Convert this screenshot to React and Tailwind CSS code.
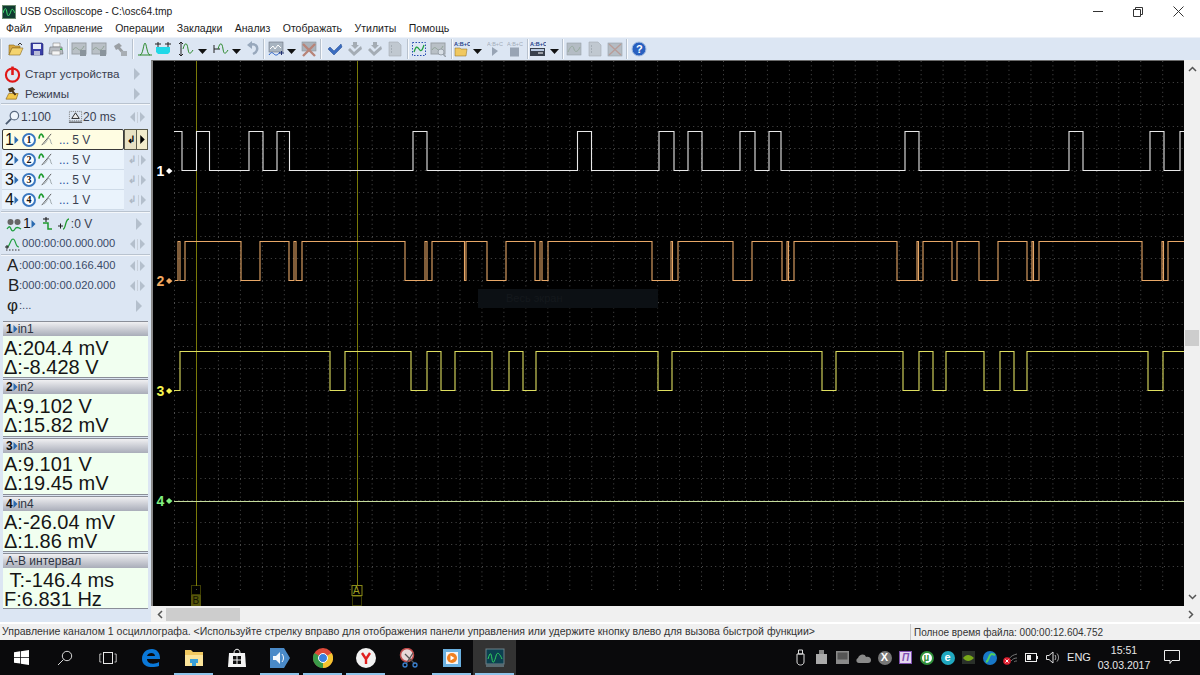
import React from 'react';

const SANS = 'font-["Liberation_Sans",Arial,sans-serif]';

// ---------- scope traces, x of every edge in page pixels ----------
const traces = [
  {
    color: '#e8e8e8', hi: 131.5, lo: 170.5, startHigh: true, from: 174, to: 1184,
    edges: [182, 196.5, 209.5, 249, 263, 277, 289.5, 413, 427, 577.5, 591.5, 659, 674, 688, 702, 740, 755, 769, 781, 905, 919, 1069, 1083, 1150, 1164, 1180],
  },
  {
    color: '#e8a868', hi: 241.5, lo: 280.5, startHigh: false, from: 175, to: 1184,
    edges: [178, 180, 185, 241, 260, 289, 294, 296, 302, 405, 425, 427, 432, 464.5, 466, 487, 506, 535, 540, 542, 548, 652, 671, 672.5, 678, 733, 752, 782, 787, 788.5, 794, 897, 917, 918.5, 923, 952, 957, 979, 998, 1027, 1032, 1033.5, 1039, 1142, 1162, 1163.5, 1168],
  },
  {
    color: '#dede60', hi: 351.5, lo: 390.5, startHigh: false, from: 174, to: 1184,
    edges: [180, 330, 345, 411, 427, 441, 455, 492, 509, 523, 536, 658, 672, 822, 836, 903, 919, 933, 946, 984, 1000, 1014, 1027, 1148, 1163],
  },
];

function wavePath({ hi, lo, startHigh, from, to, edges }) {
  let high = startHigh;
  let d = `M${from} ${high ? hi : lo}`;
  edges.forEach((x) => {
    d += `H${x}`;
    high = !high;
    d += `V${high ? hi : lo}`;
  });
  return d + `H${to}`;
}

const gridCols = Array.from({ length: 46 }, (_, i) => 174.5 + i * 21.96);
const gridRows = Array.from({ length: 24 }, (_, i) => 60.5 + i * 22);

function Scope() {
  return (
    <div className="relative flex-1 bg-black border-t border-l-2 border-t-[#6a6a6a] border-l-[#8a8a8a] overflow-hidden">
      <svg className="block w-full h-full" viewBox="153 61 1031 545">
        {gridRows.map((y) => (
          <line key={y} x1="174" x2="1184" y1={y} y2={y} stroke="#4c4c4c" strokeDasharray="1 3.4" />
        ))}
        {gridCols.map((x) => (
          <line key={x} x1={x} x2={x} y1="61" y2="590" stroke="#4c4c4c" strokeDasharray="1 3.4" />
        ))}
        <line x1="196.5" x2="196.5" y1="61" y2="586" stroke="#7a7a08" />
        <line x1="357.5" x2="357.5" y1="61" y2="586" stroke="#7a7a08" />
        {traces.map((t) => (
          <path key={t.color} d={wavePath(t)} fill="none" stroke={t.color} strokeWidth="1.100" />
        ))}
        <line x1="174" x2="1184" y1="501.5" y2="501.5" stroke="#c6dc9c" />
        {[
          ['1', 176, '#ffffff'],
          ['2', 286, '#f0a860'],
          ['3', 396, '#f4f450'],
          ['4', 506, '#80f080'],
        ].map(([n, y, c]) => (
          <g key={n} fill={c}>
            <text x="156.500" y={y} fontSize="14" fontWeight="700" fontFamily="Liberation Sans">{n}</text>
            <path d={`M166 ${y - 5}l3-3 3.500 3-3.500 3z`} />
          </g>
        ))}
        {/* cursor flags */}
        <rect x="191.500" y="585.500" width="9" height="9" fill="none" stroke="#7a7a08" strokeDasharray="1 1" />
        <rect x="191" y="595" width="10" height="11" fill="#55550a" />
        <text x="192.500" y="604" fontSize="10" fill="#121200" fontFamily="Liberation Sans">B</text>
        <rect x="352" y="585.500" width="10" height="10" fill="none" stroke="#8a8a18" />
        <text x="353" y="594" fontSize="10" fill="#a0a020" fontFamily="Liberation Sans">A</text>
        <rect x="352.500" y="596.500" width="9" height="9" fill="none" stroke="#7a7a08" strokeDasharray="1 1" />
      </svg>
      <div className="absolute left-[325px] top-[228px] w-[180px] h-[19px] bg-[#0c1014] pl-[28px] text-[11px] leading-[19px] text-[#14181c]">
        Весь экран
      </div>
    </div>
  );
}

// ---------- small drawn icons ----------
function Svg({ s = 16, className = '', children }) {
  return (
    <svg width={s} height={s} viewBox="0 0 16 16" className={`shrink-0 ${className}`}>
      {children}
    </svg>
  );
}

const DisabledScreen = () => (
  <>
    <rect x="1" y="2" width="14" height="11" fill="#b9c0c6" stroke="#99a0a6" />
    <path d="M2 9c2-3 3-3 5-1s4 1 6-3" fill="none" stroke="#8fa396" />
  </>
);

const tbIcons = {
  folder: (
    <Svg>
      <path d="M1 4h5l1 1h5v2H4L1 14z" fill="#d8a840" stroke="#8a6a20" strokeWidth=".6" />
      <path d="M4 7h11l-3 7H1z" fill="#f4d470" stroke="#8a6a20" strokeWidth=".6" />
      <path d="M10 4l2-2 2 2" fill="none" stroke="#333" />
    </Svg>
  ),
  save: (
    <Svg>
      <path d="M2 2h11l1 1v11H2z" fill="#3a3fa8" stroke="#20246a" strokeWidth=".6" />
      <rect x="4" y="3" width="8" height="5" fill="#e8ecf8" />
      <rect x="5" y="10" width="6" height="4" fill="#b8bcd8" />
    </Svg>
  ),
  print: (
    <Svg>
      <path d="M5 2h7v4H5z" fill="#f4f4f4" stroke="#888" strokeWidth=".6" />
      <path d="M2 6h12l1 7H1z" fill="#b8bcc2" stroke="#6c7076" strokeWidth=".6" />
      <rect x="4" y="10" width="8" height="4" fill="#f4f4f4" stroke="#888" strokeWidth=".5" />
      <rect x="12" y="7.500" width="2" height="1.500" fill="#30b040" />
    </Svg>
  ),
  grayDisk: (
    <Svg>
      <DisabledScreen />
      <rect x="9" y="9" width="6" height="6" fill="#8a949c" />
    </Svg>
  ),
  hammer: (
    <Svg>
      <path d="M2 5l5-3 3 3-2 1 6 7-2 2-6-7-2 1z" fill="#9a9fa4" />
      <rect x="9" y="10" width="6" height="5" fill="#a8aeb4" />
    </Svg>
  ),
  peak: (
    <Svg>
      <path d="M1 14h14" stroke="#2d8a2d" fill="none" />
      <path d="M3 14c3 0 3.500-12 5-12s2 12 5 12" fill="none" stroke="#2d8a2d" />
    </Svg>
  ),
  cyan: (
    <Svg>
      <path d="M1 6h14v5l-2 2H3L1 11z" fill="#20d8e8" />
      <path d="M0 3h6M10 3h6M3 1v5M13 1v5" stroke="#222" />
    </Svg>
  ),
  arrowsA: (
    <Svg>
      <path d="M3 1v14M1 3l2-2 2 2M1 13l2 2 2-2" fill="none" stroke="#222" />
      <path d="M5 8c2-7 4-7 5 0s3 4 5 1" fill="none" stroke="#2d8a2d" />
    </Svg>
  ),
  arrowsB: (
    <Svg>
      <path d="M1 8h6M1 4v8" fill="none" stroke="#222" />
      <path d="M5 8c2-7 4-7 5 0s3 4 5 1" fill="none" stroke="#2d8a2d" />
    </Svg>
  ),
  undo: (
    <Svg>
      <path d="M5 4c5-2 8 1 7 5-.5 2-2 3-4 4" fill="none" stroke="#98a8bc" strokeWidth="2.500" />
      <path d="M7 0L2 4l5 4z" fill="#98a8bc" />
    </Svg>
  ),
  scopeAdd: (
    <Svg>
      <rect x="1" y="1" width="14" height="10" fill="#a8b4c0" stroke="#6c7480" strokeWidth=".6" />
      <path d="M2 8l3-3 2 3 3-4 3 3" fill="none" stroke="#fff" />
      <path d="M1 14c2-3 3-3 5-1s4 1 6-2" fill="none" stroke="#2860c8" />
      <path d="M11 12h5M13.500 10v4" stroke="#203070" />
    </Svg>
  ),
  scopeX: (
    <Svg>
      <rect x="1" y="1" width="14" height="9" fill="#aab2ba" stroke="#8c949c" strokeWidth=".6" />
      <path d="M2 15L14 3M2 3l12 12" stroke="#b88478" strokeWidth="2.400" />
    </Svg>
  ),
  check: (
    <Svg>
      <path d="M1 8l2-2 4 4 7-7 1 3-8 8z" fill="#3a6cc0" stroke="#204a90" strokeWidth=".5" />
    </Svg>
  ),
  checkGray: (
    <Svg>
      <path d="M1 9l2-2 4 4 7-6 1 3-8 7z" fill="#a4acb4" />
      <path d="M6 1h4v3h2L8 8 4 4h2z" fill="#a4acb4" />
    </Svg>
  ),
  page: (
    <Svg>
      <path d="M2 1h9l3 3v11H2z" fill="#c0c8d0" stroke="#a4acb4" strokeWidth=".6" />
      <path d="M4 5h1M4 8h1M4 11h1" stroke="#8a949c" />
    </Svg>
  ),
  dotsScope: (
    <Svg>
      <rect x="1.500" y="1.500" width="13" height="13" fill="none" stroke="#2a50b0" strokeDasharray="1.500 1.500" />
      <path d="M3 11c2-6 3-6 5-3s3 2 5-4" fill="none" stroke="#20a040" strokeWidth="1.300" />
    </Svg>
  ),
  lens: (
    <Svg>
      <DisabledScreen />
      <circle cx="11" cy="11" r="3" fill="#d8dfe6" stroke="#9aa2aa" />
      <path d="M13 13l3 3" stroke="#9aa2aa" strokeWidth="1.500" />
    </Svg>
  ),
  abcFolder: (
    <Svg>
      <text x="0" y="5" fontSize="5.500" fontWeight="700" fill="#22408a" fontFamily="Liberation Sans">A:B+C</text>
      <path d="M1 7h5l1 1h6l-1 7H1z" fill="#f0c860" stroke="#8a6a20" strokeWidth=".5" />
    </Svg>
  ),
  abcPlay: (
    <Svg>
      <text x="0" y="5" fontSize="5.500" fill="#a4acb8" fontFamily="Liberation Sans">A:B+C</text>
      <path d="M5 6l6 4-6 5z" fill="#98a4b4" />
    </Svg>
  ),
  abcStop: (
    <Svg>
      <text x="0" y="5" fontSize="5.500" fill="#a4acb8" fontFamily="Liberation Sans">A:B+C</text>
      <rect x="3" y="6.500" width="9" height="9" fill="#98a4b4" />
    </Svg>
  ),
  abcPanel: (
    <Svg>
      <text x="0" y="5" fontSize="5.500" fontWeight="700" fill="#22408a" fontFamily="Liberation Sans">A:B+C</text>
      <rect x="0" y="7" width="15" height="8" fill="#38404c" />
      <rect x="1" y="8" width="13" height="2" fill="#b8c8e0" />
      <path d="M8 12h5" stroke="#fff" />
    </Svg>
  ),
  grayWave: (
    <Svg>
      <rect x="1" y="2" width="14" height="12" fill="#b4bcc4" stroke="#98a0a8" strokeWidth=".6" />
      <path d="M2 11c3-7 5-7 6-3s4 3 6-2" fill="none" stroke="#98aca0" />
    </Svg>
  ),
  grayX: (
    <Svg>
      <rect x="1" y="2" width="14" height="13" fill="#b4bcc4" stroke="#98a0a8" strokeWidth=".6" />
      <path d="M2 3l12 11M14 3L2 14" stroke="#b89c98" strokeWidth="1.300" />
    </Svg>
  ),
  help: (
    <Svg>
      <circle cx="8" cy="8" r="7" fill="#2860c0" stroke="#a8c0e0" />
      <text x="5" y="12" fontSize="11" fontWeight="700" fill="#fff" fontFamily="Liberation Sans">?</text>
    </Svg>
  ),
};

// icon name (or sep / drop) and the width it takes in the bar
const toolbar = [
  ['sep', 8], ['folder', 21], ['save', 19], ['print', 19], ['sep', 4], ['grayDisk', 20], ['grayDisk', 21], ['hammer', 20],
  ['sep', 5], ['peak', 18], ['cyan', 23], ['arrowsA', 20], ['drop', 15], ['arrowsB', 19], ['drop', 13], ['undo', 18],
  ['sep', 5], ['scopeAdd', 19], ['drop', 14], ['scopeX', 19], ['sep', 7], ['check', 20], ['checkGray', 20], ['checkGray', 20], ['page', 20],
  ['sep', 4], ['dotsScope', 19], ['lens', 21], ['sep', 3], ['abcFolder', 19], ['drop', 14], ['abcPlay', 20], ['abcStop', 20],
  ['sep', 3], ['abcPanel', 20], ['drop', 12], ['sep', 4], ['grayWave', 21], ['page', 20], ['grayX', 19], ['sep', 5], ['help', 16],
];

function Toolbar() {
  return (
    <div className="flex items-center h-[23px] bg-[#dce6f3] border-t border-t-[#eef2f8]">
      {toolbar.map(([name, w], i) => (
        <div key={i} className="flex items-center h-full shrink-0" style={{ width: w }}>
          {name === 'sep' ? (
            <div className="w-[2px] h-[20px] bg-[#f8fafd] border-l border-l-[#b8c2ce]" />
          ) : name === 'drop' ? (
            <svg width="9" height="5" viewBox="0 0 9 5" className="mt-1"><path d="M0 0h9L4.500 5z" fill="#111" /></svg>
          ) : (
            tbIcons[name]
          )}
        </div>
      ))}
    </div>
  );
}

// ---------- left panel ----------
function Tri({ right = true, c = '#b4bfcc', w = 6, h = 12 }) {
  return (
    <svg width={w} height={h} viewBox="0 0 6 12" className="shrink-0">
      <path d={right ? 'M0 0l6 6-6 6z' : 'M6 0L0 6l6 6z'} fill={c} />
    </svg>
  );
}

function BothArrows() {
  return (
    <div className="flex items-center gap-[2px] ml-auto mr-[6px]">
      <Tri right={false} w={5} h={10} />
      <div className="w-px h-[11px] bg-[#c8d0da]" />
      <Tri w={5} h={10} />
    </div>
  );
}

function Row({ h, children, className = '' }) {
  return (
    <div className={`flex items-center shrink-0 ${className}`} style={{ height: h }}>
      {children}
    </div>
  );
}

const Sep = () => <div className="h-[2px] mx-[1px] shrink-0 bg-[#b9c3cf] border-b border-b-[#f4f7fb]" />;

const Probe = () => (
  <Svg s={15}>
    <path d="M1 7c1-6 3-6 5-1" fill="none" stroke="#1e9a2e" strokeWidth="1.800" />
    <path d="M4 14L14 2" stroke="#555" />
    <path d="M6 13c3-1 4-7 6-6s1 5 3 6" fill="none" stroke="#9aa4a8" />
  </Svg>
);

function ChannelRow({ n, volts, active }) {
  return (
    <div className={`flex shrink-0 pl-[2px] ${active ? 'h-[21px]' : 'h-[20px]'}`}>
      <div
        className={`flex items-center w-[122px] ${
          active
            ? 'bg-[#fffde2] border border-[#3a3a3a] rounded-[2px] pl-[2px]'
            : 'bg-[#eaf3fc] border-b border-b-[#cfdbe8] pl-[3px]'
        }`}
      >
        <span className="text-[16px] leading-none w-[9px] text-[#111]">{n}</span>
        <Tri c="#2a6ab0" w={5} h={8} />
        <div className="ml-[3px] flex items-center justify-center w-[14px] h-[14px] rounded-full border-2 border-[#3a78c0] bg-white text-[10px] leading-none font-['Liberation_Serif',serif] font-bold text-[#111]">
          {n}
        </div>
        <div className="ml-[2px]"><Probe /></div>
        <span className="ml-[6px] text-[12px] text-[#3a4050]"><span className="text-[#2a50a0]">...</span> {volts}</span>
      </div>
      {active ? (
        <div className="flex h-[21px] w-[24px]">
          <div className="w-[13px] bg-[#e8e2c4] border border-[#5a5a4a] flex items-center justify-center text-[10px] font-bold text-black">↲</div>
          <div className="w-[11px] bg-[#f2eccc] border-y border-r border-[#5a5a4a] flex items-center justify-center"><Tri c="#000" w={5} h={9} /></div>
        </div>
      ) : (
        <div className="flex items-center gap-[2px] w-[24px] pl-[4px]">
          <span className="text-[10px] font-bold leading-none text-[#aeb8c4]">↲</span>
          <div className="w-px h-[11px] bg-[#c8d0da]" />
          <Tri w={5} h={10} />
        </div>
      )}
    </div>
  );
}

const timeCls = 'text-[11.200px] leading-none text-[#3a4a68]';

function Measure({ head, lines, h, tight }) {
  return (
    <div className="mx-[3px] shrink-0 mb-[1px]">
      <div className="h-[15px] bg-linear-to-b from-[#f0f0f2] to-[#a9adb9] border-t border-t-[#8a8e98] text-[12px] leading-[14px] pl-[3px] text-[#2e3442] flex items-center">
        {head}
      </div>
      <div
        className={`bg-[#f1fff0] border-b border-b-[#8a8e98] text-[20px] leading-[19px] pl-[1px] text-[#151515] ${tight ? 'pt-[2px]' : 'pt-[3px]'}`}
        style={{ height: h }}
      >
        {lines.map((l) => (
          <div key={l}>{l}</div>
        ))}
      </div>
    </div>
  );
}

const ChHead = ({ n, name }) => (
  <>
    <b className="text-[#111]">{n}</b>
    <Tri c="#2a6ab0" w={5} h={8} />
    <span>{name}</span>
  </>
);

function LeftPanel() {
  return (
    <aside className="w-[151px] shrink-0 bg-[#dce6f3] flex flex-col text-[#3a4050]">
      <Row h={24} className="pl-[4px] pt-[4px]">
        <Svg s={17}>
          <circle cx="8" cy="8.500" r="6.200" fill="none" stroke="#e01818" strokeWidth="2" />
          <rect x="6.800" y="0.500" width="2.400" height="8" fill="#e01818" />
        </Svg>
        <span className="ml-[4px] text-[11.600px] w-[109px]">Старт устройства</span>
        <Tri />
      </Row>
      <Row h={19} className="pl-[5px]">
        <Svg s={15}>
          <path d="M1 14l3-6h10l-2 6z" fill="#f4c848" stroke="#8a6418" strokeWidth=".7" />
          <path d="M3 3l5-2 3 3-2 1 3 4-1.500 1L7 6 5 7z" fill="#4a3418" />
        </Svg>
        <span className="ml-[5px] text-[11.600px] w-[109px]">Режимы</span>
        <Tri />
      </Row>
      <Sep />
      <Row h={24} className="pl-[5px] text-[12px]">
        <Svg s={15}>
          <circle cx="10" cy="6" r="4.500" fill="#f0f6fc" stroke="#5a6a80" strokeWidth="1.300" />
          <path d="M6.500 9.500L1 15" stroke="#4a5a70" strokeWidth="2" />
        </Svg>
        <span className="ml-[1px] w-[47px]">1:100</span>
        <Svg s={15}>
          <rect x="1.500" y="1.500" width="13" height="10" fill="none" stroke="#777" strokeDasharray="1 1" />
          <path d="M8 3l4 6H4zM1 13h14" fill="#eee" stroke="#222" />
        </Svg>
        <span>20 ms</span>
        <BothArrows />
      </Row>
      <div className="flex flex-col">
        <ChannelRow n="1" volts="5 V" active />
        <ChannelRow n="2" volts="5 V" />
        <ChannelRow n="3" volts="5 V" />
        <ChannelRow n="4" volts="1 V" />
      </div>
      <div className="h-[1px]" />
      <Sep />
      <Row h={21} className="pl-[6px] text-[12px]">
        <Svg s={16}>
          <circle cx="4.500" cy="6" r="3" fill="#666" />
          <circle cx="11.500" cy="6" r="3" fill="#666" />
          <path d="M1 13c2-3 3-3 4 0s3 2 4 0 3-2 6 0" fill="none" stroke="#20a040" strokeWidth="1.300" />
        </Svg>
        <span className="ml-[1px] text-[14px] text-[#111]">1</span>
        <Tri c="#2a6ab0" w={5} h={8} />
        <svg width="10" height="13" viewBox="0 0 10 13" className="ml-[6px]">
          <path d="M1 2h6M4 0v5" stroke="#111" />
          <path d="M1 6h5v6h4" fill="none" stroke="#1e9a2e" strokeWidth="1.500" />
        </svg>
        <svg width="12" height="14" viewBox="0 0 12 14" className="ml-[6px]">
          <path d="M0 9h5M2.500 6.500v5" stroke="#222" />
          <path d="M5 12c3 0 2-10 6-10" fill="none" stroke="#1e9a2e" strokeWidth="1.300" />
        </svg>
        <span className="ml-[1px]">:0 V</span>
        <div className="ml-auto mr-[9px]"><Tri /></div>
      </Row>
      <Row h={20} className="pl-[5px]">
        <Svg s={16}>
          <path d="M2 11c3 0 3-8 6-8s2 8 6 8" fill="none" stroke="#20a040" strokeWidth="1.200" />
          <path d="M1 14h14" stroke="#333" strokeDasharray="1.500 1.500" />
          <path d="M0 11h4M2 9v4" stroke="#222" />
        </Svg>
        <span className={`ml-[1px] ${timeCls}`}>000:00:00.000.000</span>
        <BothArrows />
      </Row>
      <Sep />
      <Row h={19} className="pl-[7px]">
        <span className="text-[17px] w-[12px] text-[#222]">A</span>
        <span className={timeCls}>:000:00:00.166.400</span>
        <BothArrows />
      </Row>
      <Row h={21} className="pl-[8px]">
        <span className="text-[17px] w-[11px] text-[#222]">B</span>
        <span className={timeCls}>:000:00:00.020.000</span>
        <BothArrows />
      </Row>
      <Row h={19} className="pl-[7px]">
        <span className="text-[17px] w-[12px] text-[#222]">φ</span>
        <span className={timeCls}>:...</span>
        <div className="ml-auto mr-[9px]"><Tri /></div>
      </Row>
      <div className="h-[6px] shrink-0" />
      <Measure head={<ChHead n="1" name="in1" />} lines={['A:204.4 mV', 'Δ:-8.428 V']} h={42} />
      <Measure head={<ChHead n="2" name="in2" />} lines={['A:9.102 V', 'Δ:15.82 mV']} h={43} />
      <Measure head={<ChHead n="3" name="in3" />} lines={['A:9.101 V', 'Δ:19.45 mV']} h={42} tight />
      <Measure head={<ChHead n="4" name="in4" />} lines={['A:-26.04 mV', 'Δ:1.86 mV']} h={41} tight />
      <Measure head="A-B интервал" lines={['\u00a0T:-146.4 ms', 'F:6.831 Hz']} h={41} />
    </aside>
  );
}

// ---------- taskbar ----------
const taskIcons = [
  { active: false, el: (
    <svg width="15" height="15" viewBox="0 0 16 16"><path d="M0 2.300L6.500 1.400V7.500H0zM7.300 1.300L16 0V7.500H7.300zM0 8.300H6.500V14.500L0 13.600zM7.300 8.300H16V16L7.300 14.700z" fill="#fff" /></svg>
  ) },
  { active: false, el: (
    <svg width="16" height="16" viewBox="0 0 16 16"><circle cx="10" cy="6" r="4.700" fill="none" stroke="#d8d8d8" /><path d="M6.500 9.500L1 15" stroke="#d8d8d8" /></svg>
  ) },
  { active: false, el: (
    <svg width="18" height="14" viewBox="0 0 18 14"><rect x="4.500" y="1.500" width="9" height="11" fill="none" stroke="#e8e8e8" /><path d="M2.500 3H.8v8h1.700M15.500 3h1.700v8h-1.700" fill="none" stroke="#bbb" /></svg>
  ) },
  { active: false, el: (
    <svg width="20" height="20" viewBox="0 0 20 20"><path d="M1 11C1 5 5 1 11 1c5 0 8 4 8 9v1H6c0 5 7 6 12 3v4c-6 2-17 2-17-7zM6 8h8c0-4-7-4-8 0z" fill="#0a78d8" /></svg>
  ) },
  { active: true, el: (
    <svg width="20" height="18" viewBox="0 0 20 18"><path d="M1 1h6l2 2h10v14H1z" fill="#f0c860" /><rect x="1" y="6" width="18" height="11" fill="#fbe49a" /><rect x="6" y="10" width="8" height="4" fill="#3aa0d8" /><rect x="8" y="14" width="4" height="3" fill="#3aa0d8" /></svg>
  ) },
  { active: false, el: (
    <svg width="18" height="20" viewBox="0 0 18 20"><path d="M1 5h16l1 14H0z" fill="#f4f4f4" /><path d="M6 5c0-5 6-5 6 0" fill="none" stroke="#f4f4f4" /><path d="M5 8h3.500v3.500H5zM9.500 8H13v3.500H9.500zM5 12.500h3.500V16H5zM9.500 12.500H13V16H9.500z" fill="#111" /></svg>
  ) },
  { active: true, el: (
    <svg width="22" height="20" viewBox="0 0 22 20"><path d="M1 0h14l6 10-6 10H1z" fill="#4a8ac8" /><path d="M4 8h3l4-4v12l-4-4H4z" fill="#f4f8fc" /><path d="M13 6c2 2 2 6 0 8" fill="none" stroke="#f4f8fc" /></svg>
  ) },
  { active: true, el: (
    <svg width="20" height="20" viewBox="0 0 20 20"><circle cx="10" cy="10" r="10" fill="#de4a3a" /><path d="M10 10L18.700 5A10 10 0 0 1 10 20z" fill="#f4c430" /><path d="M10 10v10A10 10 0 0 1 1.300 5z" fill="#3a9a48" /><circle cx="10" cy="10" r="4.500" fill="#3a80e0" stroke="#fff" /></svg>
  ) },
  { active: true, el: (
    <svg width="20" height="20" viewBox="0 0 20 20"><circle cx="10" cy="10" r="10" fill="#f2f2f2" /><path d="M6 5l4 6 4-6M10 11v5" fill="none" stroke="#e02020" strokeWidth="2.400" /></svg>
  ) },
  { active: false, el: (
    <svg width="20" height="20" viewBox="0 0 20 20"><circle cx="8" cy="7" r="6.500" fill="#e8d8d8" stroke="#c04a4a" strokeWidth="1.500" /><path d="M6 6l10 10M14 5L7 16" stroke="#555" strokeWidth="1.300" /><circle cx="6" cy="17" r="2" fill="none" stroke="#3a80d0" strokeWidth="1.300" /><circle cx="16" cy="17" r="2" fill="none" stroke="#3a80d0" strokeWidth="1.300" /></svg>
  ) },
  { active: true, el: (
    <svg width="18" height="18" viewBox="0 0 18 18"><rect width="18" height="18" fill="#6ab0e0" /><rect x="3" y="3" width="12" height="12" fill="#f4f4f4" /><circle cx="9" cy="9" r="5" fill="#f08020" /><path d="M7.500 6.500l4 2.500-4 2.500z" fill="#fff" /></svg>
  ) },
  { active: true, current: true, el: (
    <svg width="20" height="20" viewBox="0 0 20 20"><rect x="1" y="1" width="18" height="15" fill="#0c4050" stroke="#6c8088" /><path d="M3 11c2-7 3-7 4 0s3 1 4-3 3-4 6 3" fill="none" stroke="#30d060" /><rect x="1" y="16" width="18" height="3" fill="#5a6a70" /></svg>
  ) },
];

const trayIcons = [
  <svg key="usb" width="11" height="18" viewBox="0 0 11 18"><path d="M3.500 1h4v4h-4zM2 5h7v8c0 4-7 4-7 0z" fill="none" stroke="#ddd" /></svg>,
  <svg key="usb2" width="11" height="15" viewBox="0 0 11 15"><rect x="3" y="0" width="5" height="4" fill="#888" /><rect x="0" y="4" width="11" height="10" fill="#aaa" /></svg>,
  <svg key="box" width="13" height="13" viewBox="0 0 13 13"><rect width="13" height="13" fill="#8a8a8a" /><rect x="1.500" y="1.500" width="10" height="7" fill="#555" /></svg>,
  <svg key="cloud" width="15" height="10" viewBox="0 0 15 10"><path d="M3 10C0 10-.5 6 2 5c1-4 7-5 8-1 3-1 5 1 5 3s-1 3-3 3z" fill="#8a8a8a" /></svg>,
  <div key="x" className="flex items-center justify-center w-[14px] h-[14px] rounded-full bg-[#777] text-white text-[11px] font-bold leading-none">X</div>,
  <div key="note" className="flex items-center justify-center w-[13px] h-[13px] bg-[#e4d8f0] border border-[#8050b0] text-[#8050b0] text-[10px] italic font-bold leading-none">П</div>,
  <div key="ut" className="flex items-center justify-center w-[14px] h-[14px] rounded-full bg-[#fff] border-2 border-[#30903a] text-[#30903a] text-[10px] font-bold leading-none">µ</div>,
  <div key="e" className="flex items-center justify-center w-[14px] h-[14px] rounded-full bg-[#20a8c0] text-white text-[11px] font-bold leading-none">e</div>,
  <svg key="nv" width="13" height="13" viewBox="0 0 13 13"><rect width="13" height="13" fill="#2a302a" /><path d="M1 7c3-4 7-4 11 0-4 4-8 4-11 0z" fill="#78a818" /></svg>,
  <svg key="globe" width="14" height="14" viewBox="0 0 14 14"><circle cx="7" cy="7" r="7" fill="#1878c8" /><path d="M3 11c3-1 2-5 5-8M8 3c2 0 4 1 4 1" fill="none" stroke="#50d060" strokeWidth="2" /></svg>,
  <svg key="net" width="15" height="14" viewBox="0 0 15 14"><path d="M6 8c2-3 4-4 8-5M8 10c2-2 3-3 6-3M11 11c1-1 2-1 3-1" fill="none" stroke="#777" /><circle cx="4" cy="10" r="3.800" fill="#e02030" /><path d="M2.500 8.500l3 3M5.500 8.500l-3 3" stroke="#fff" /></svg>,
  <svg key="bat" width="13" height="9" viewBox="0 0 13 9"><rect x=".5" y=".5" width="11" height="8" fill="none" stroke="#eee" /><rect x="2" y="2" width="4" height="5" fill="#eee" /><rect x="12" y="3" width="1" height="3" fill="#eee" /></svg>,
  <svg key="vol" width="14" height="13" viewBox="0 0 14 13"><path d="M.5 4.500h2.500L7 1v11L3 8.500H.5z" fill="none" stroke="#ddd" /><path d="M9 4c1 1.500 1 3.500 0 5M11 2.500c2 2.500 2 5.500 0 8" fill="none" stroke="#bbb" /></svg>,
];

function Taskbar() {
  return (
    <div className="flex h-[35px] bg-[#0a0a0c] text-[#e8e8e8] shrink-0">
      {taskIcons.map((t, i) => (
        <div
          key={i}
          className={`relative flex items-center justify-center w-[43px] shrink-0 ${t.current ? 'bg-[#333333]' : ''}`}
        >
          {t.el}
          {t.active && <div className="absolute left-[2px] right-[2px] bottom-0 h-[2px] bg-[#8ec4ea]" />}
        </div>
      ))}
      <div className="flex-1" />
      {trayIcons.map((el, i) => (
        <div key={i} className="flex items-center justify-center w-[21px] shrink-0">{el}</div>
      ))}
      <div className="w-[32px] flex items-center justify-center text-[11px]">ENG</div>
      <div className="w-[58px] flex flex-col items-center justify-center text-[10.500px] leading-[15px]">
        <span>15:51</span>
        <span>03.03.2017</span>
      </div>
      <div className="w-[37px] flex items-center justify-center">
        <svg width="16" height="15" viewBox="0 0 16 15"><path d="M.5.500h15v10H8l-2 3v-3H.5z" fill="none" stroke="#eee" /></svg>
      </div>
      <div className="w-[10px]" />
    </div>
  );
}

export default function App() {
  return (
    <div className={`w-[1200px] h-[675px] flex flex-col overflow-hidden bg-white ${SANS}`}>
      {/* title bar */}
      <div className="flex items-center h-[21px] bg-white shrink-0 pt-[2px]">
        <div className="ml-[2px] w-[14px] h-[14px] bg-[#103a30] border border-[#6c8a70] flex items-center justify-center">
          <svg width="12" height="9" viewBox="0 0 12 9"><path d="M0 6c2-6 3-6 4 0s3 1 4-2 2-2 4 2" fill="none" stroke="#40e070" /></svg>
        </div>
        <span className="ml-[4px] text-[10.300px] text-[#222]">USB Oscilloscope - C:\osc64.tmp</span>
        <div className="flex-1" />
        <div className="flex w-[107px] justify-between items-center pr-[16px]">
          <div className="w-[10px] h-px bg-[#333]" />
          <svg width="10" height="10" viewBox="0 0 10 10"><path d="M2.500 2.500V.5h7v7h-2M.5 2.500h7v7h-7z" fill="none" stroke="#333" /></svg>
          <svg width="11" height="11" viewBox="0 0 11 11"><path d="M.5.500l10 10M10.500.500l-10 10" stroke="#333" /></svg>
        </div>
      </div>
      {/* menu */}
      <div className="flex items-center h-[16px] pl-[6px] gap-[12.500px] text-[10.500px] text-[#1c1c1c] bg-white shrink-0">
        {['Файл', 'Управление', 'Операции', 'Закладки', 'Анализ', 'Отображать', 'Утилиты', 'Помощь'].map((m) => (
          <span key={m}>{m}</span>
        ))}
      </div>
      <Toolbar />
      {/* working area */}
      <div className="flex flex-1 min-h-0 bg-[#dce6f3]">
        <LeftPanel />
        <div className="flex-1 min-w-0 flex flex-col">
          <div className="flex flex-1 min-h-0">
            <Scope />
            <div className="w-[16px] bg-[#f0f0f0] flex flex-col items-center shrink-0">
              <svg width="9" height="6" viewBox="0 0 9 6" className="mt-[6px]"><path d="M1 5l3.500-3.500L8 5" fill="none" stroke="#555" strokeWidth="1.500" /></svg>
              <div className="w-[14px] h-[16px] bg-[#cdcdcd] mt-[258px] mr-[1px]" />
              <div className="flex-1" />
              <svg width="9" height="6" viewBox="0 0 9 6" className="mb-[6px]"><path d="M1 1l3.500 3.500L8 1" fill="none" stroke="#555" strokeWidth="1.500" /></svg>
            </div>
          </div>
          <div className="flex items-center h-[16px] bg-[#f0f0f0] shrink-0">
            <svg width="6" height="9" viewBox="0 0 6 9" className="ml-[6px]"><path d="M5 1L1.500 4.500 5 8" fill="none" stroke="#555" strokeWidth="1.500" /></svg>
            <div className="ml-[3px] w-[74px] h-[13px] bg-[#cdcdcd]" />
            <div className="flex-1" />
            <svg width="6" height="9" viewBox="0 0 6 9" className="mr-[6px]"><path d="M1 1l3.500 3.500L1 8" fill="none" stroke="#555" strokeWidth="1.500" /></svg>
          </div>
        </div>
      </div>
      {/* status bar */}
      <div className="flex items-center h-[18px] bg-[#f0f0f0] border-t-2 border-t-white text-[10.500px] text-[#333] shrink-0">
        <div className="w-[911px] pl-[2px] whitespace-nowrap border-r border-r-[#c8c8c8] overflow-hidden">
          Управление каналом 1 осциллографа. &lt;Используйте стрелку вправо для отображения панели управления или удержите кнопку влево для вызова быстрой функции&gt;
        </div>
        <div className="pl-[3px] text-[10px]">Полное время файла: 000:00:12.604.752</div>
      </div>
      <Taskbar />
    </div>
  );
}
